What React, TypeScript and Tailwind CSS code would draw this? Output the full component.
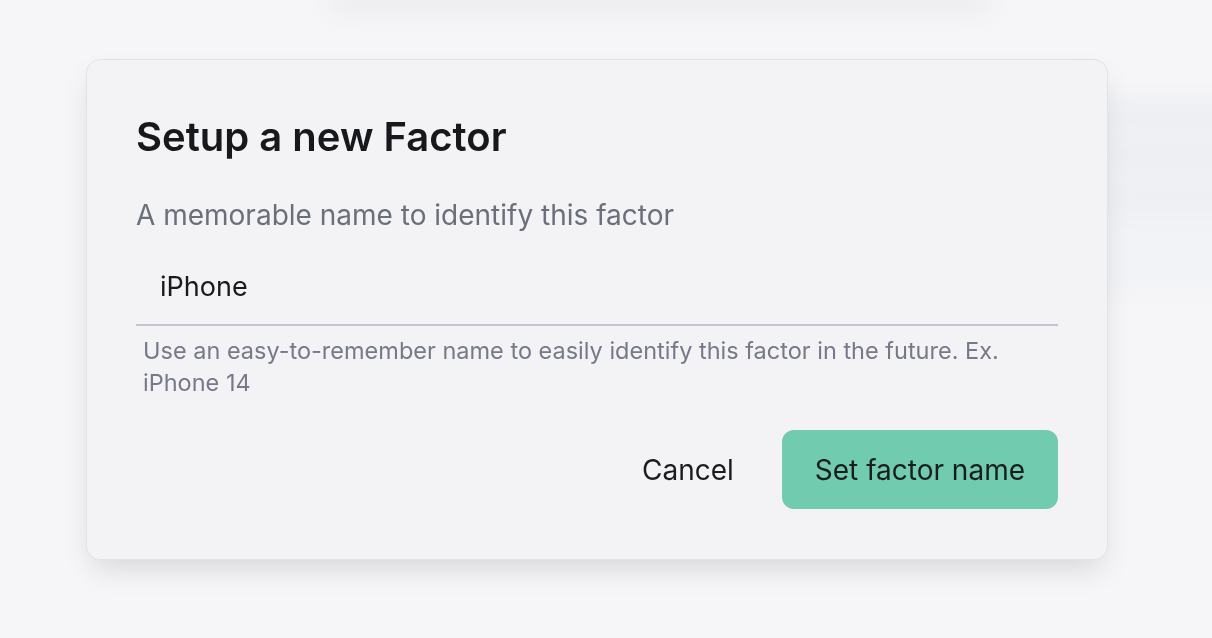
import React from 'react';

export default function App() {
  return (
    <div
      className="relative h-[638px] w-full overflow-hidden bg-[#f6f6f8]"
      style={{ fontFamily: 'Inter, "Noto Sans", sans-serif' }}
    >
      {/* blurred page behind the modal */}
      <div className="absolute left-[330px] top-[-6px] h-[14px] w-[660px] rounded-full bg-[#e6e6ea] blur-md" />
      <div className="absolute left-[318px] top-[100px] h-[192px] w-[940px] rounded-2xl bg-[#f2f3f6] blur-sm">
        <div className="ml-[790px] mt-[8px] h-[12px] w-[140px] rounded bg-[#e6e7ec] blur-md" />
        <div className="ml-[790px] mt-[30px] h-[12px] w-[130px] rounded bg-[#e6e7ec] blur-md" />
        <div className="ml-[790px] mt-[30px] h-[12px] w-[140px] rounded bg-[#e8e9ee] blur-md" />
      </div>

      <div className="relative ml-[86px] mt-[59px] w-[1022px] rounded-[14px] border border-[#e2e2e6] bg-[#f3f3f5] px-[49px] pb-[50px] pt-[53px] shadow-[0_14px_30px_-6px_rgba(0,0,0,0.13)]">
        <h2 className="text-[40px] font-semibold leading-[48px] text-[#17181c]">Setup a new Factor</h2>
        <p className="mt-[38px] text-[28px] leading-[32px] text-[#6b6f7b]">
          A memorable name to identify this factor
        </p>
        <input
          className="mt-[18px] block h-[77px] w-full border-b-2 border-[#c3c4d3] bg-transparent px-6 text-[27px] text-[#1a1a1c] outline-none"
          defaultValue="iPhone"
        />
        <p className="mt-[9px] pl-[7px] text-[23.5px] leading-[32px] text-[#767a88]">
          Use an easy-to-remember name to easily identify this factor in the future. Ex. iPhone 14
        </p>
        <div className="mt-[31px] flex items-center justify-end gap-[15px]">
          <button className="h-[79px] rounded-xl px-[33px] text-[28px] text-[#1a1c1e]">Cancel</button>
          <button className="h-[79px] rounded-xl bg-[#71cbae] px-[33px] text-[28px] text-[#1a1c1e]">
            Set factor name
          </button>
        </div>
      </div>
    </div>
  );
}
